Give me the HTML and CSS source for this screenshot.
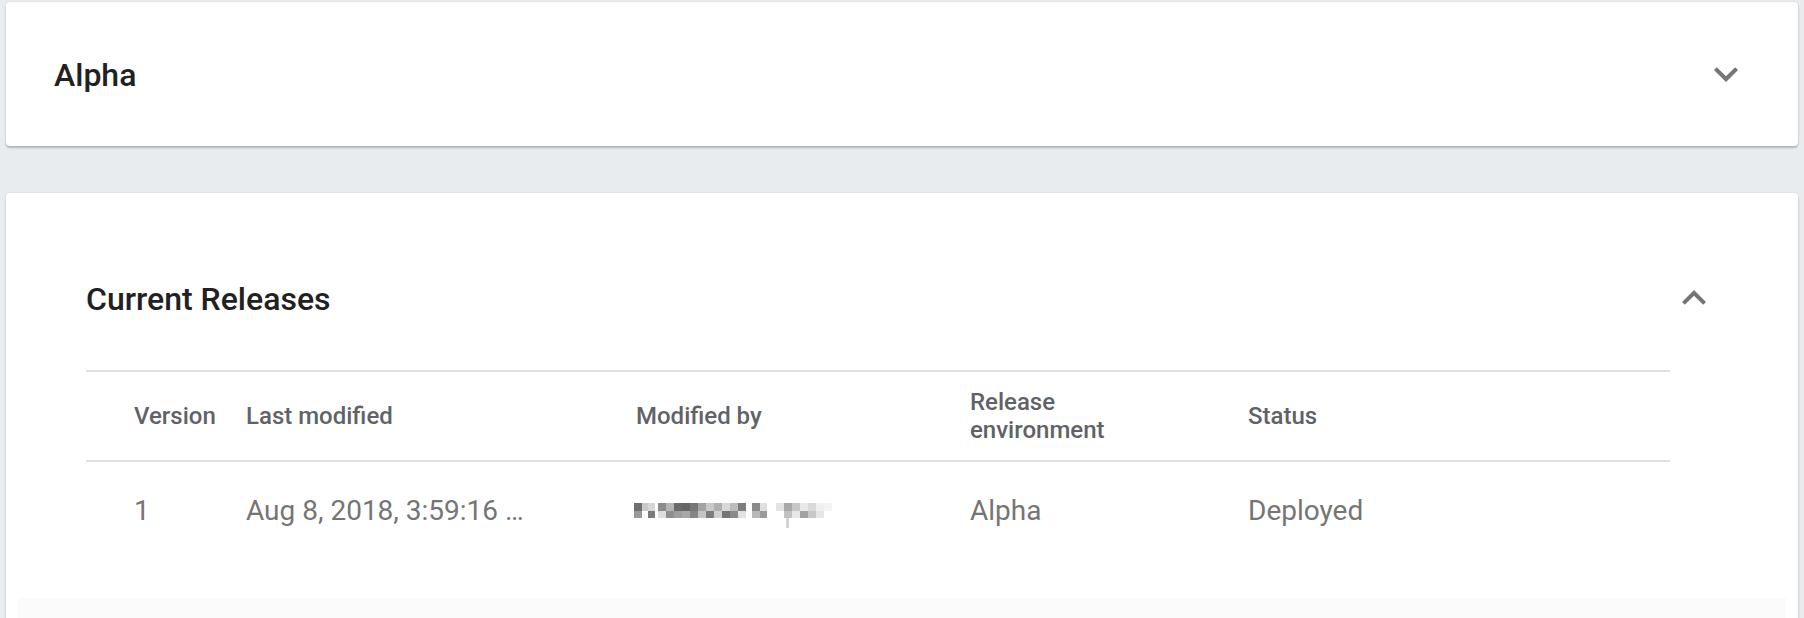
FILE: index.html
```html
<!DOCTYPE html>
<html lang="en">
<head>
<meta charset="utf-8">
<title>Releases</title>
<link rel="stylesheet" href="styles.css">
</head>
<body>
<div class="page">
  <section class="card card-collapsed">
    <h2 class="card-title">Alpha</h2>
    <svg class="chev" viewBox="0 0 24 24" width="48" height="48"><path d="M16.59 8.59L12 13.17 7.41 8.59 6 10l6 6 6-6z"/></svg>
  </section>

  <section class="card card-open">
    <div class="open-head">
      <h2 class="card-title">Current Releases</h2>
      <svg class="chev" viewBox="0 0 24 24" width="48" height="48"><path d="M12 8l-6 6 1.41 1.41L12 10.83l4.59 4.58L18 14z"/></svg>
    </div>
    <div class="table">
      <div class="row head">
        <div class="cell first">Version</div>
        <div class="cell">Last modified</div>
        <div class="cell">Modified by</div>
        <div class="cell">Release<br>environment</div>
        <div class="cell">Status</div>
      </div>
      <div class="row data">
        <div class="cell first">1</div>
        <div class="cell">Aug 8, 2018, 3:59:16 …</div>
        <div class="cell">
          <svg class="blur" width="208" height="26" viewBox="0 0 208 26">
            <rect x="0" y="0" width="8" height="8" fill="#6f6f6f"/>
            <rect x="0" y="8" width="8" height="7" fill="#9a9a9a"/>
            <rect x="8" y="0" width="6" height="8" fill="#c9c9c9"/>
            <rect x="14" y="8" width="7" height="7" fill="#7a7a7a"/>
            <rect x="14" y="0" width="7" height="8" fill="#d6d6d6"/>
            <rect x="24" y="0" width="8" height="8" fill="#8c8c8c"/>
            <rect x="24" y="8" width="8" height="7" fill="#dcdcdc"/>
            <rect x="32" y="0" width="8" height="8" fill="#b5b5b5"/>
            <rect x="32" y="8" width="8" height="7" fill="#8e8e8e"/>
            <rect x="40" y="0" width="8" height="8" fill="#6a6a6a"/>
            <rect x="40" y="8" width="8" height="7" fill="#9e9e9e"/>
            <rect x="48" y="0" width="8" height="8" fill="#666"/>
            <rect x="48" y="8" width="8" height="7" fill="#a8a8a8"/>
            <rect x="56" y="0" width="8" height="8" fill="#777"/>
            <rect x="56" y="8" width="8" height="7" fill="#858585"/>
            <rect x="64" y="0" width="8" height="8" fill="#a3a3a3"/>
            <rect x="64" y="8" width="8" height="7" fill="#c4c4c4"/>
            <rect x="72" y="0" width="8" height="8" fill="#c9c9c9"/>
            <rect x="72" y="8" width="8" height="7" fill="#7c7c7c"/>
            <rect x="80" y="0" width="8" height="8" fill="#b0b0b0"/>
            <rect x="80" y="8" width="8" height="7" fill="#d0d0d0"/>
            <rect x="88" y="0" width="8" height="8" fill="#d8d8d8"/>
            <rect x="88" y="8" width="8" height="7" fill="#747474"/>
            <rect x="96" y="0" width="8" height="8" fill="#bdbdbd"/>
            <rect x="96" y="8" width="8" height="7" fill="#8a8a8a"/>
            <rect x="104" y="0" width="8" height="8" fill="#7d7d7d"/>
            <rect x="104" y="8" width="8" height="7" fill="#e2e2e2"/>
            <rect x="118" y="0" width="8" height="8" fill="#8a8a8a"/>
            <rect x="118" y="8" width="8" height="7" fill="#b9b9b9"/>
            <rect x="126" y="0" width="7" height="8" fill="#e0e0e0"/>
            <rect x="126" y="8" width="7" height="7" fill="#9a9a9a"/>
            <rect x="142" y="0" width="8" height="8" fill="#e4e4e4"/>
            <rect x="150" y="0" width="8" height="8" fill="#a9a9a9"/>
            <rect x="150" y="8" width="8" height="7" fill="#c2c2c2"/>
            <rect x="152" y="15" width="3" height="10" fill="#d5d5d5"/>
            <rect x="158" y="0" width="8" height="8" fill="#c7c7c7"/>
            <rect x="158" y="8" width="8" height="7" fill="#e6e6e6"/>
            <rect x="166" y="0" width="8" height="8" fill="#e9e9e9"/>
            <rect x="166" y="8" width="8" height="7" fill="#a2a2a2"/>
            <rect x="174" y="0" width="8" height="8" fill="#d9d9d9"/>
            <rect x="174" y="8" width="8" height="7" fill="#c8c8c8"/>
            <rect x="182" y="0" width="8" height="8" fill="#f0f0f0"/>
            <rect x="182" y="8" width="8" height="7" fill="#e5e5e5"/>
            <rect x="190" y="0" width="8" height="8" fill="#f4f4f4"/>
          </svg>
        </div>
        <div class="cell">Alpha</div>
        <div class="cell">Deployed</div>
      </div>
    </div>
    <div class="card-foot"></div>
  </section>
</div>
</body>
</html>
```

FILE: styles.css
```css
* { box-sizing: border-box; }

html, body {
  margin: 0;
  padding: 0;
  background: #e8ecef;
  font-family: Roboto, "Liberation Sans", Arial, sans-serif;
  overflow: hidden;
}

.page {
  padding: 2px 6px 0 6px;
  display: flex;
  flex-direction: column;
  gap: 47px;
}

.card {
  background: #fff;
  border-radius: 4px;
  box-shadow: 0 2px 2px rgba(0, 0, 0, 0.22), 0 0 2px rgba(0, 0, 0, 0.10);
}

.card-title {
  margin: 0;
  font-size: 32px;
  font-weight: 500;
  line-height: 48px;
  color: #212121;
  position: relative;
  top: 1px;
}

.chev {
  display: block;
  fill: #757575;
  flex: none;
}

.card-collapsed {
  height: 144px;
  padding: 0 48px;
  display: flex;
  align-items: center;
  justify-content: space-between;
}

.card-open {
  padding: 81px 0 0 0;
  min-height: 460px;
}

.open-head {
  display: flex;
  align-items: center;
  justify-content: space-between;
  padding: 0 80px;
  height: 48px;
}

.table {
  margin: 48px 128px 0 80px;
  border-top: 2px solid #e0e0e0;
}

.row {
  display: grid;
  grid-template-columns: 160px 390px 334px 278px 1fr;
  align-items: center;
}

.row.head {
  height: 90px;
  border-bottom: 2px solid #e0e0e0;
  font-size: 24px;
  line-height: 28px;
  font-weight: 500;
  color: #5f6368;
}

.row.data {
  height: 96px;
  font-size: 28px;
  line-height: 32px;
  font-weight: 400;
  color: #757575;
}

.row.data .cell {
  position: relative;
  top: 1px;
}

.cell.first {
  padding-left: 48px;
}

.blur {
  display: block;
  margin-top: 10px;
  margin-left: -2px;
}

.card-foot {
  margin: 40px 12px 0 12px;
  height: 40px;
  background: #fbfbfb;
}
```
